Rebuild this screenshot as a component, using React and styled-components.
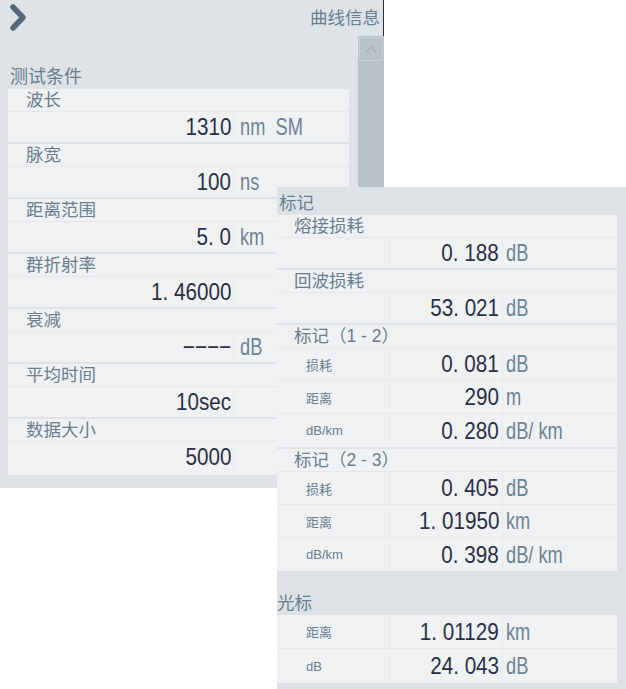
import React from "react";
import styled, { createGlobalStyle } from "styled-components";

const TEXT = `"Liberation Sans", Arial, "Noto Sans CJK SC", sans-serif`;

const GlobalStyle = createGlobalStyle`
  *, *::before, *::after {
    box-sizing: border-box;
  }
  html, body {
    margin: 0;
    padding: 0;
    background: #ffffff;
  }
  body {
    font-family: ${TEXT};
  }
`;

const Stage = styled.div`
  position: relative;
  width: 626px;
  height: 689px;
  overflow: hidden;
  background: #ffffff;
`;

// left window: "曲线信息" / 测试条件
const LeftWindow = styled.div`
  position: absolute;
  left: 0;
  top: 0;
  width: 384px;
  height: 488px;
  background: #dee3e7;
  display: flex;
  flex-direction: column;
`;

const Header = styled.div`
  height: 36px;
  flex: none;
  display: flex;
  align-items: center;
  justify-content: space-between;
  padding: 0 3px 0 8px;
  border-right: 1px solid #2b2d30;
`;

const HeaderTitle = styled.div`
  font-size: 17.5px;
  color: #6a7e8f;
  line-height: 24px;
`;

const Body = styled.div`
  flex: 1;
  display: flex;
  min-height: 0;
`;

const Content = styled.div`
  flex: 1;
  padding: 26px 9px 0 8px;
`;

const ScrollTrack = styled.div`
  width: 26px;
  flex: none;
  background: #bac3cb;
  display: flex;
  flex-direction: column;
`;

const ScrollUp = styled.div`
  margin: 1px 1px 0 1px;
  height: 24px;
  border: 1px solid #c9d0d6;
  display: flex;
  align-items: center;
  justify-content: center;
`;

const SectionTitle = styled.div`
  height: 27px;
  line-height: 31px;
  padding-left: ${(p) => p.$indent || 0}px;
  font-size: 18px;
  color: #6a7e8f;
`;

const Card = styled.div`
  background: #eff1f3;
  padding-bottom: ${(p) => p.$tail || 0}px;
`;

const Item = styled.div`
  border-bottom: 2px solid #dfe3e7;

  &:last-child {
    border-bottom: none;
  }
`;

const LabelRow = styled.div`
  height: 23px;
  line-height: 22px;
  padding-left: ${(p) => p.$indent}px;
  font-size: 17.5px;
  color: #6a7e8f;
  border-bottom: 1px solid #e5e8eb;
  white-space: pre;
`;

const ValueRow = styled.div`
  height: ${(p) => p.$h || 30}px;
  display: grid;
  grid-template-columns: ${(p) => p.$cols};
  align-items: stretch;
  border-bottom: ${(p) => (p.$line ? "1px solid #e5e8eb" : "none")};

  &:last-child {
    border-bottom: none;
  }
`;

const SmallLabel = styled.div`
  display: flex;
  align-items: center;
  padding-left: 29px;
  font-size: 13px;
  color: #6a7e8f;
  border-right: 1px solid #e8ebee;
`;

const Blank = styled.div`
  border-right: 1px solid #e8ebee;
`;

const Num = styled.div`
  display: flex;
  align-items: center;
  justify-content: flex-end;
  padding-right: ${(p) => p.$pad || 3}px;
  border-right: 1px solid #e8ebee;
`;

const Unit = styled.div`
  display: flex;
  align-items: center;
  padding-left: ${(p) => p.$pad || 3}px;
`;

// digits in the reference are tall and narrow, so squeeze Arial metrics a bit
const Digits = styled.span`
  display: inline-block;
  font-size: 24px;
  line-height: 1;
  color: #2b2f45;
  white-space: pre;
  transform: scaleX(0.86);
  transform-origin: right center;
`;

const UnitText = styled.span`
  display: inline-block;
  font-size: 24px;
  line-height: 1;
  color: #6c8396;
  white-space: pre;
  transform: scaleX(0.76);
  transform-origin: left center;
`;

// right window: 标记 / 光标
const RightWindow = styled.div`
  position: absolute;
  left: 277px;
  top: 187px;
  width: 349px;
  height: 502px;
  padding-right: 9px;
  background: #dde2e6;
`;

const PanelTitle = styled.div`
  height: 28px;
  padding: 4px 0 0 ${(p) => p.$indent || 0}px;
  margin-top: ${(p) => p.$gap || 0}px;
  line-height: 24px;
  font-size: 17.5px;
  color: #6a7e8f;
`;

const Chevron = () => (
  <svg width="24" height="32" viewBox="0 0 24 32">
    <polyline
      points="5,5 15,15.5 5,26"
      fill="none"
      stroke="#56697a"
      strokeWidth="5.5"
      strokeLinecap="round"
      strokeLinejoin="round"
    />
  </svg>
);

const Caret = () => (
  <svg width="12" height="8" viewBox="0 0 12 8">
    <polyline points="1,7 6,2 11,7" fill="none" stroke="#a6b1ba" strokeWidth="1.5" />
  </svg>
);

const conditions = [
  { label: "波长", num: "1310", unit: "nm  SM" },
  { label: "脉宽", num: "100", unit: "ns" },
  { label: "距离范围", num: "5. 0", unit: "km" },
  { label: "群折射率", num: "1. 46000", unit: "" },
  { label: "衰减", num: "−−−−", unit: "dB" },
  { label: "平均时间", num: "10sec", unit: "" },
  { label: "数据大小", num: "5000", unit: "" },
];

const markerGroups = [
  {
    title: "标记（1 - 2）",
    rows: [
      { label: "损耗", num: "0. 081", unit: "dB" },
      { label: "距离", num: "290", unit: "m" },
      { label: "dB/km", num: "0. 280", unit: "dB/ km" },
    ],
  },
  {
    title: "标记（2 - 3）",
    rows: [
      { label: "损耗", num: "0. 405", unit: "dB" },
      { label: "距离", num: "1. 01950", unit: "km" },
      { label: "dB/km", num: "0. 398", unit: "dB/ km" },
    ],
  },
];

const cursor = [
  { label: "距离", num: "1. 01129", unit: "km" },
  { label: "dB", num: "24. 043", unit: "dB" },
];

const RIGHT_COLS = "113px 113px 1fr";

export default function App() {
  return (
    <>
      <GlobalStyle />
      <Stage>
        <LeftWindow>
          <Header>
            <Chevron />
            <HeaderTitle>曲线信息</HeaderTitle>
          </Header>
          <Body>
            <Content>
              <SectionTitle $indent={2}>测试条件</SectionTitle>
              <Card $tail={3}>
                {conditions.map((c) => (
                  <Item key={c.label}>
                    <LabelRow $indent={18}>{c.label}</LabelRow>
                    <ValueRow $cols="226px 1fr">
                      <Num $pad={2}>
                        <Digits>{c.num}</Digits>
                      </Num>
                      <Unit $pad={6}>
                        <UnitText>{c.unit}</UnitText>
                      </Unit>
                    </ValueRow>
                  </Item>
                ))}
              </Card>
            </Content>
            <ScrollTrack>
              <ScrollUp>
                <Caret />
              </ScrollUp>
            </ScrollTrack>
          </Body>
        </LeftWindow>

        <RightWindow>
          <PanelTitle $indent={2}>标记</PanelTitle>
          <Card>
            <Item>
              <LabelRow $indent={17}>熔接损耗</LabelRow>
              <ValueRow $cols={RIGHT_COLS}>
                <Blank />
                <Num>
                  <Digits>0. 188</Digits>
                </Num>
                <Unit>
                  <UnitText>dB</UnitText>
                </Unit>
              </ValueRow>
            </Item>
            <Item>
              <LabelRow $indent={17}>回波损耗</LabelRow>
              <ValueRow $cols={RIGHT_COLS}>
                <Blank />
                <Num>
                  <Digits>53. 021</Digits>
                </Num>
                <Unit>
                  <UnitText>dB</UnitText>
                </Unit>
              </ValueRow>
            </Item>
            {markerGroups.map((g) => (
              <Item key={g.title}>
                <LabelRow $indent={17}>{g.title}</LabelRow>
                {g.rows.map((r) => (
                  <ValueRow key={r.label} $cols={RIGHT_COLS} $h={33} $line>
                    <SmallLabel>{r.label}</SmallLabel>
                    <Num>
                      <Digits>{r.num}</Digits>
                    </Num>
                    <Unit>
                      <UnitText>{r.unit}</UnitText>
                    </Unit>
                  </ValueRow>
                ))}
              </Item>
            ))}
          </Card>
          <PanelTitle $gap={16}>光标</PanelTitle>
          <Card>
            {cursor.map((r) => (
              <ValueRow key={r.label} $cols={RIGHT_COLS} $h={34} $line>
                <SmallLabel>{r.label}</SmallLabel>
                <Num>
                  <Digits>{r.num}</Digits>
                </Num>
                <Unit>
                  <UnitText>{r.unit}</UnitText>
                </Unit>
              </ValueRow>
            ))}
          </Card>
        </RightWindow>
      </Stage>
    </>
  );
}
